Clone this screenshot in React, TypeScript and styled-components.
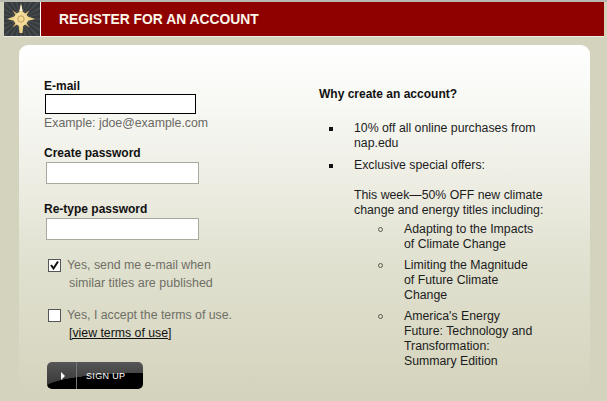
import React from "react";
import styled, { createGlobalStyle } from "styled-components";

const Global = createGlobalStyle`
  html, body { margin: 0; padding: 0; background: #d4d4be; }
  body { font-family: "Liberation Sans", Arial, sans-serif; width: 607px; height: 401px; overflow: hidden; }
`;
const Page = styled.div`
  width: 607px; height: 401px; overflow: hidden; box-sizing: border-box;
  border-top: 2px solid #b9b9b4; padding: 0 3px 0 4px;
`;
const Header = styled.header`
  display: flex; height: 34px; gap: 1px; background: #fff; border-bottom: 1px solid #f0efe6;
`;
const Logo = styled.div`
  width: 36px; height: 34px; background: #373b3e; flex: none;
  svg { display: block; }
`;
const Banner = styled.div`
  flex: 1; background: #8f0000; display: flex; align-items: center; padding-left: 18px;
`;
const Title = styled.h1`
  margin: 0; color: #fbf6ea; font-size: 13.85px; font-weight: 700; line-height: 15px;
`;
const Card = styled.main`
  margin: 8px 14px 0 15px; height: 360px; box-sizing: border-box;
  border-radius: 9px 9px 0 0;
  background: linear-gradient(180deg, #ffffff 0%, #f4f4ee 25%, #e0e0cf 62%, #d3d3bc 100%);
  display: flex; padding: 28px 0 0 25px;
`;
const FormCol = styled.form`
  width: 275px; flex: none; display: flex; flex-direction: column;
`;
const Label = styled.label<{ $top: number }>`
  display: block; font-size: 12px; font-weight: 700; color: #111; line-height: 14px; margin-top: ${(p) => p.$top}px;
`;
const TextInput = styled.input<{ $focus?: boolean }>`
  display: block; box-sizing: border-box; background: #fff; padding: 0; outline: none;
  width: ${(p) => (p.$focus ? 151 : 153)}px; height: ${(p) => (p.$focus ? 20 : 22)}px;
  margin: ${(p) => (p.$focus ? "1px 0 0 1px" : "2px 0 0 2px")};
  border: ${(p) => (p.$focus ? "1px solid #000" : "1px solid #a9a9a0")};
`;
const Hint = styled.div`
  font-size: 12.35px; color: #6a6a64; line-height: 15px; margin-top: 2px;
`;
const CheckRow = styled.div<{ $top: number }>`
  display: flex; margin: ${(p) => p.$top}px 0 0 4px;
`;
const Box = styled.span`
  width: 11px; height: 11px; border: 1px solid #555; background: #fff; flex: none; margin-top: 3px;
  svg { display: block; }
`;
const CheckText = styled.div`
  margin-left: 6px; font-size: 12.3px; line-height: 18px; color: #6f6f66;
`;
const Indented = styled.span`
  display: block; padding-left: 2px; font-size: 12.5px;
`;
const TermsLink = styled.a`
  display: block; padding-left: 2px; color: #111; text-decoration: underline; font-size: 12.3px;
`;
const SignUp = styled.button`
  display: flex; align-items: center; margin: 20px 0 0 3px; padding: 0; width: 96px; height: 27px;
  border: none; border-radius: 5px; cursor: pointer; overflow: hidden; color: #fff;
  background: radial-gradient(ellipse 100px 16px at 96px 27px, #000 0 98%, transparent 100%),
    linear-gradient(180deg, #565656, #333);
`;
const PlayCell = styled.span`
  width: 30px; height: 100%; flex: none; display: flex; align-items: center; justify-content: center;
  border-right: 1px solid #777; box-sizing: border-box; padding-left: 3px;
`;
const Play = styled.span`
  width: 0; height: 0; border-left: 4px solid #fff; border-top: 4px solid transparent; border-bottom: 4px solid transparent;
`;
const BtnText = styled.span`
  margin-left: 9px; font-family: "Liberation Sans", sans-serif; font-size: 9px; letter-spacing: 0.35px;
`;
const InfoCol = styled.aside`
  flex: 1; padding-top: 14px; font-size: 12.3px; color: #1c1c1c; line-height: 15px;
`;
const InfoTitle = styled.h2`
  margin: 0 0 19px; font-size: 12px; font-weight: 700; line-height: 15px; color: #111;
`;
const List = styled.ul`
  margin: 0; padding: 0; list-style: none; width: 232px;
`;
const Item = styled.li`
  position: relative; padding-left: 35px; margin-bottom: 7px;
  &::before { content: ""; position: absolute; left: 10px; top: 6px; width: 4px; height: 4px; background: #111; }
`;
const Para = styled.p`
  margin: 15px 0 0;
`;
const SubList = styled.ul`
  margin: 4px 0 0; padding: 0; list-style: none;
`;
const SubItem = styled.li`
  position: relative; padding-left: 50px; width: 132px; margin-bottom: 6px;
  &::before { content: ""; position: absolute; left: 24px; top: 5px; width: 3px; height: 3px; border: 1px solid #5a5a4c; border-radius: 50%; }
`;

const rays = Array.from({ length: 24 }, (_, i) => (i * 360) / 24);
const diagonals = [45, 135, 225, 315];
const minors = [22.5, 67.5, 112.5, 157.5, 202.5, 247.5, 292.5, 337.5];

export default function App() {
  return (
    <Page>
      <Global />
      <Header>
        <Logo>
          <svg width="36" height="34" viewBox="0 0 36 34">
            <defs>
              <filter id="soft" x="-10%" y="-10%" width="120%" height="120%">
                <feGaussianBlur stdDeviation="0.55" />
              </filter>
            </defs>
            {rays.map((a) => (
              <path key={a} d="M17 17 L15.8 -8 L18.2 -8 Z" fill="#5f666b" opacity="0.4" transform={`rotate(${a} 17 17)`} />
            ))}
            <g filter="url(#soft)">
              <path d="M17 2 L19.5 13 L31 17 L19.5 20 L18.5 31 L15.5 31 L14.5 20 L3 17 L14.5 13 Z" fill="#eed489" />
              <path d="M17 2 L18.5 9 L15.5 9 Z" fill="#fff6dc" />
              {diagonals.map((a) => (
                <path key={a} d="M14.5 17 L17 5 L19.5 17 Z" fill="#e0c070" transform={`rotate(${a} 17 17)`} />
              ))}
              {minors.map((a) => (
                <path key={a} d="M15.5 17 L17 8 L18.5 17 Z" fill="#d0b064" transform={`rotate(${a} 17 17)`} />
              ))}
              <circle cx="17" cy="17" r="7" fill="#f2db9c" />
              <circle cx="17" cy="17" r="3.2" fill="none" stroke="#c29c4c" strokeWidth="1" />
            </g>
          </svg>
        </Logo>
        <Banner>
          <Title>REGISTER FOR AN ACCOUNT</Title>
        </Banner>
      </Header>
      <Card>
        <FormCol>
          <Label $top={6}>E-mail</Label>
          <TextInput $focus />
          <Hint>Example: jdoe@example.com</Hint>
          <Label $top={15}>Create password</Label>
          <TextInput type="password" />
          <Label $top={18}>Re-type password</Label>
          <TextInput type="password" />
          <CheckRow $top={16}>
            <Box>
              <svg width="11" height="11" viewBox="0 0 11 11">
                <path d="M2 5 L4.5 8.5 L9 1.5" fill="none" stroke="#111" strokeWidth="2" />
              </svg>
            </Box>
            <CheckText>
              Yes, send me e-mail when
              <Indented>similar titles are published</Indented>
            </CheckText>
          </CheckRow>
          <CheckRow $top={14}>
            <Box />
            <CheckText>
              Yes, I accept the terms of use.
              <TermsLink href="#">[view terms of use]</TermsLink>
            </CheckText>
          </CheckRow>
          <SignUp type="button">
            <PlayCell><Play /></PlayCell>
            <BtnText>SIGN UP</BtnText>
          </SignUp>
        </FormCol>
        <InfoCol>
          <InfoTitle>Why create an account?</InfoTitle>
          <List>
            <Item>10% off all online purchases from nap.edu</Item>
            <Item>
              Exclusive special offers:
              <Para>This week—50% OFF new climate change and energy titles including:</Para>
              <SubList>
                <SubItem>Adapting to the Impacts of Climate Change</SubItem>
                <SubItem>Limiting the Magnitude of Future Climate Change</SubItem>
                <SubItem>America's Energy Future: Technology and Transformation: Summary Edition</SubItem>
              </SubList>
            </Item>
          </List>
        </InfoCol>
      </Card>
    </Page>
  );
}
